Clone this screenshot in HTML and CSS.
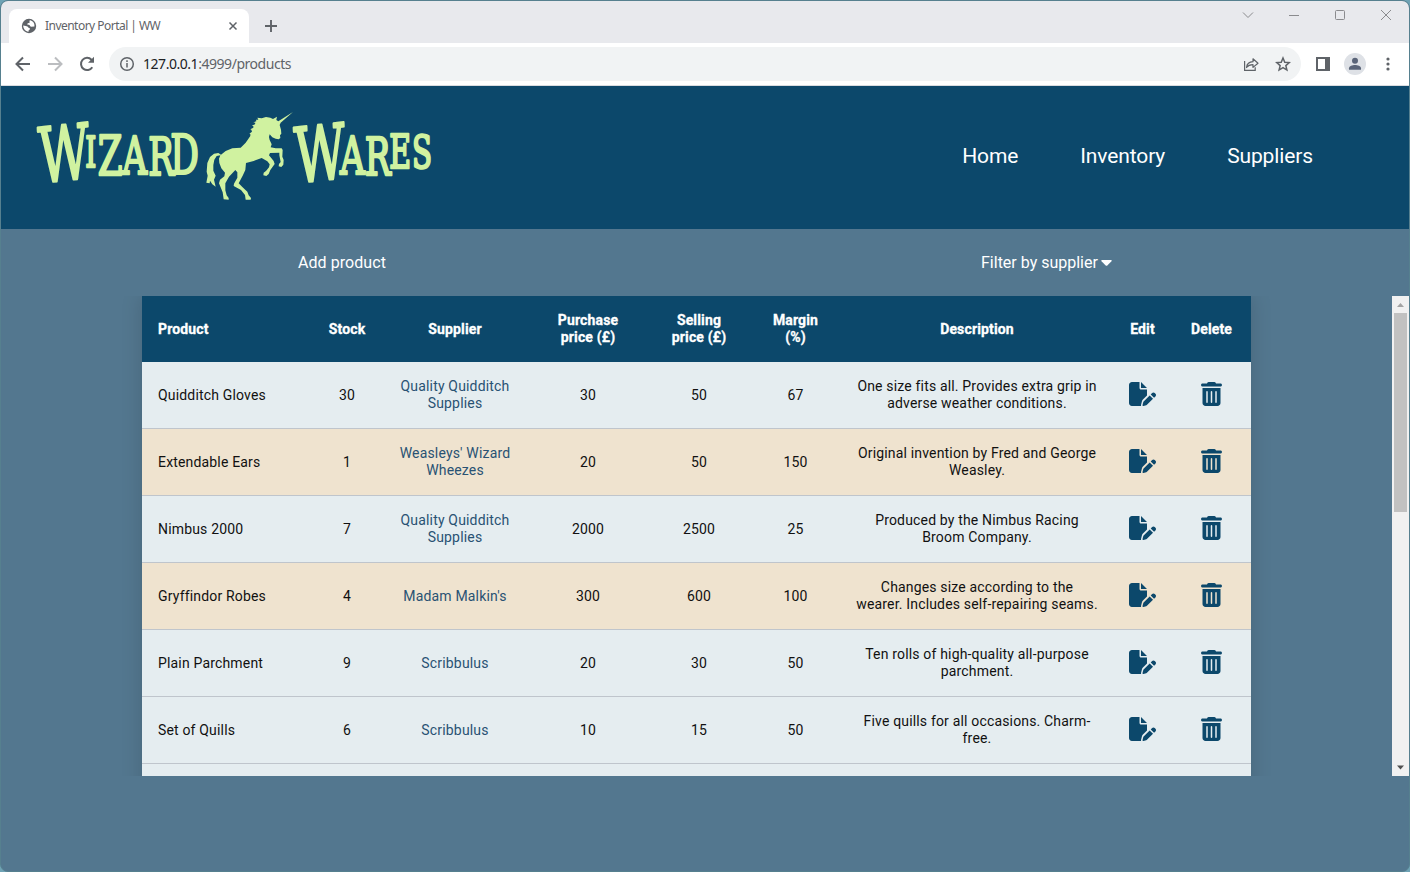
FILE: index.html
```html
<!DOCTYPE html>
<html lang="en">
<head>
<meta charset="utf-8">
<title>Inventory Portal | WW</title>
<link rel="stylesheet" href="styles.css">
</head>
<body>
<svg class="defs" aria-hidden="true">
  <symbol id="edit" viewBox="0 0 576 512"><path d="M0 64C0 28.700 28.700 0 64 0H224V128c0 17.700 14.300 32 32 32H384V285.700l-86.800 86.800c-10.300 10.300-17.500 23.100-21 37.200l-18.700 74.900c-2.300 9.200-1.800 18.800 1.300 27.500H64c-35.300 0-64-28.700-64-64V64zm384 64H256V0L384 128zM549.800 235.700l14.400 14.400c15.600 15.600 15.600 40.900 0 56.600l-29.400 29.400-71-71 29.400-29.400c15.600-15.600 40.900-15.600 56.600 0zM311.900 417L441.100 287.800l71 71L382.900 487.900c-4.100 4.100-9.200 7-14.900 8.400l-60.100 15c-5.500 1.400-11.200-.2-15.200-4.200s-5.600-9.700-4.200-15.200l15-60.100c1.400-5.600 4.300-10.800 8.400-14.900z"/></symbol>
  <symbol id="trash" viewBox="0 0 448 512"><path d="M135.200 17.700C140.600 6.800 151.700 0 163.800 0H284.200c12.100 0 23.200 6.800 28.600 17.700L320 32h96c17.700 0 32 14.300 32 32s-14.300 32-32 32H32C14.300 96 0 81.700 0 64S14.300 32 32 32h96l7.200-14.300zM32 128H416V448c0 35.300-28.700 64-64 64H96c-35.300 0-64-28.700-64-64V128zm96 64c-8.800 0-16 7.200-16 16V432c0 8.800 7.200 16 16 16s16-7.200 16-16V208c0-8.800-7.200-16-16-16zm96 0c-8.800 0-16 7.200-16 16V432c0 8.800 7.200 16 16 16s16-7.200 16-16V208c0-8.800-7.200-16-16-16zm96 0c-8.800 0-16 7.200-16 16V432c0 8.800 7.200 16 16 16s16-7.200 16-16V208c0-8.800-7.200-16-16-16z"/></symbol>
</svg>
<div class="window">
  <div class="tabstrip">
    <div class="tab">
      <svg class="globe" width="16" height="16" viewBox="0 0 16 16"><circle cx="8" cy="8" r="7.200" fill="#5f6368"/><path d="M9.300 2.300c-1 .3-1.100.8-.7 1.500.3.800-.3 1.200-1.100 1.300-.9.200-1.300.7-1.100 1.400.5.500 1.600.1 2.300.8.500.5.500 1.300 1.300 1.500l3.400-.2c.6-3-1.300-5.500-4.100-6.300zM2.200 7.500c0 3.300 2.300 5.800 5.300 6.200l.2-1.400 1.300-1c.1-1-.6-1.300-1.500-1.500-.6-1.200-1.400-1.800-2.700-1.900z" fill="#fff"/></svg>
      <span class="tab-title">Inventory Portal | WW</span>
      <svg class="tab-close" width="10" height="10" viewBox="0 0 10 10"><path d="M1.500 1.500l7 7M8.500 1.500l-7 7" stroke="#5f6368" stroke-width="1.500"/></svg>
    </div>
    <svg class="plus" width="14" height="14" viewBox="0 0 14 14"><path d="M7 1v12M1 7h12" stroke="#5f6368" stroke-width="1.900"/></svg>
    <div class="controls">
      <svg width="12" height="12" viewBox="0 0 12 12"><path d="M1 3.500l5 5 5-5"/></svg>
      <svg width="12" height="12" viewBox="0 0 12 12"><path d="M1 6.500h10"/></svg>
      <svg width="12" height="12" viewBox="0 0 12 12"><rect x="1.500" y="1.500" width="9" height="9" rx="1"/></svg>
      <svg width="12" height="12" viewBox="0 0 12 12"><path d="M1 1l10 10M11 1L1 11"/></svg>
    </div>
  </div>
  <div class="toolbar">
    <svg class="nav-icon" viewBox="0 0 16 16"><path d="M15 8H2.500M8 1.500L1.500 8 8 14.500"/></svg>
    <svg class="nav-icon dim" viewBox="0 0 16 16"><path d="M1 8h12.500M8 1.500L14.500 8 8 14.500"/></svg>
    <svg class="nav-icon" viewBox="0 0 16 16"><path d="M13.300 11.200a6.100 6.100 0 1 1-.8-7.500L14 5.200"/><path d="M15 .8v6H9z" fill="#5f6368" stroke="none"/></svg>
    <div class="address">
      <svg width="16" height="16" viewBox="0 0 16 16" fill="none" stroke="#5f6368" stroke-width="1.500"><circle cx="8" cy="8" r="6.300"/><path d="M8 7v4.500M8 4.200v1.700"/></svg>
      <span class="url"><b>127.0.0.1</b>:4999/products</span>
      <svg class="share" width="16" height="16" viewBox="0 0 16 16" fill="none" stroke="#5f6368" stroke-width="1.200"><path d="M1.600 5v9.300h10.600v-3"/><path d="M3.500 11.500c.5-4 2.800-5.700 6.500-5.800V2.800l5 4.400-5 4.200V8.700c-3 0-5 .8-6.500 2.800z" stroke-linejoin="round"/></svg>
      <svg width="16" height="16" viewBox="0 0 16 16" fill="none" stroke="#5f6368" stroke-width="1.500"><path d="M8 2l1.750 4.200 4.550.4-3.450 3 1.050 4.450L8 11.700l-3.900 2.350 1.050-4.450-3.450-3 4.550-.4z"/></svg>
    </div>
    <svg class="panel-icon" width="14" height="14" viewBox="0 0 14 14"><path d="M1 1h12v12H1z" fill="none" stroke="#5f6368" stroke-width="2"/><path d="M9 0h5v14H9z" fill="#5f6368"/></svg>
    <svg class="avatar" width="22" height="22" viewBox="0 0 22 22"><circle cx="11" cy="11" r="11" fill="#dee1e6"/><circle cx="11" cy="7.800" r="3" fill="#5a6478"/><path d="M5 16.700v-1.500c0-2 3.500-3.200 6-3.200s6 1.200 6 3.200v1.500z" fill="#5a6478"/></svg>
    <svg class="dots" width="4" height="14" viewBox="0 0 4 14" fill="#5f6368"><circle cx="2" cy="2" r="1.600"/><circle cx="2" cy="7" r="1.600"/><circle cx="2" cy="12" r="1.600"/></svg>
  </div>
  <header class="site-header">
    <svg class="logo" width="410" height="100" viewBox="30 105 410 100">
      <g class="wordmark" transform="scale(.65 1)">
        <text><tspan class="w" x="61" y="183" rotate="-4">W</tspan><tspan x="131" y="167" font-size="43">I</tspan><tspan x="150.500" y="175" font-size="55">Z</tspan><tspan x="188" y="174.500" font-size="53">A</tspan><tspan x="228" y="175" font-size="53">R</tspan><tspan x="262" y="174" font-size="55">D</tspan></text>
        <text><tspan class="w" x="455" y="183" rotate="-4">W</tspan><tspan x="523" y="174.500" font-size="53">A</tspan><tspan x="561" y="175" font-size="53">R</tspan><tspan x="599" y="168" font-size="46">E</tspan><tspan x="634" y="168" font-size="45">S</tspan></text>
      </g>
      <path class="unicorn" transform="translate(200 105) scale(.33333)" d="M279 21L242 53 239 60 243 74 244 86 240 91 241 99 236 103 227 101 217 97 209 88 207 96 209 105 215 118 212 127 227 130 245 130 248 135 247 155 251 165 250 179 244 186 236 184 237 177 242 171 238 151 238 143 210 144 207 151 221 168 224 177 211 195 206 207 199 213 190 211 191 203 198 198 207 187 209 178 202 169 185 159 161 168 138 174 136 195 128 212 116 235 127 246 142 260 146 271 153 279 152 284 137 284 135 270 123 255 101 243 102 236 112 218 112 202 106 195 87 215 76 235 76 256 80 271 86 279 86 284 71 283 68 262 57 235 60 224 73 214 75 203 64 190 58 174 57 161 61 151 50 153 43 164 40 180 40 197 47 212 42 224 47 245 37 238 30 227 29 235 19 233 23 212 20 200 22 174 30 156 42 146 55 144 63 149 77 138 97 130 122 128 137 113 151 93 151 87 148 86 156 80 154 74 151 73 160 68 160 63 155 62 165 58 166 53 160 52 169 49 168 44 175 44 172 38 185 40 198 36 211 38 219 42 231 35 229 45 235 49Z"/>
    </svg>
    <nav class="site-nav"><a>Home</a><a>Inventory</a><a>Suppliers</a></nav>
  </header>
  <div class="actions">
    <a class="add">Add product</a>
    <a class="filter">Filter by supplier <svg width="11" height="6" viewBox="0 0 11 6"><path d="M1 0h9q1.200.4.500 1.300L6.300 5.500q-.8.700-1.600 0L.5 1.300Q-.2.400 1 0z" fill="#fff"/></svg></a>
  </div>
  <div class="viewport">
    <div class="table-clip">
    <table class="products">
      <colgroup><col class="c-product"><col class="c-stock"><col class="c-supplier"><col class="c-buy"><col class="c-sell"><col class="c-margin"><col class="c-desc"><col class="c-edit"><col class="c-delete"></colgroup>
      <thead><tr><th>Product</th><th>Stock</th><th>Supplier</th><th>Purchase<br>price (£)</th><th>Selling<br>price (£)</th><th>Margin<br>(%)</th><th>Description</th><th>Edit</th><th>Delete</th></tr></thead>
      <tbody>
        <tr><td>Quidditch Gloves</td><td>30</td><td><a>Quality Quidditch<br>Supplies</a></td><td>30</td><td>50</td><td>67</td><td>One size fits all. Provides extra grip in<br>adverse weather conditions.</td><td><svg class="edit"><use href="#edit"/></svg></td><td><svg class="trash"><use href="#trash"/></svg></td></tr>
        <tr class="low"><td>Extendable Ears</td><td>1</td><td><a>Weasleys' Wizard<br>Wheezes</a></td><td>20</td><td>50</td><td>150</td><td>Original invention by Fred and George<br>Weasley.</td><td><svg class="edit"><use href="#edit"/></svg></td><td><svg class="trash"><use href="#trash"/></svg></td></tr>
        <tr><td>Nimbus 2000</td><td>7</td><td><a>Quality Quidditch<br>Supplies</a></td><td>2000</td><td>2500</td><td>25</td><td>Produced by the Nimbus Racing<br>Broom Company.</td><td><svg class="edit"><use href="#edit"/></svg></td><td><svg class="trash"><use href="#trash"/></svg></td></tr>
        <tr class="low"><td>Gryffindor Robes</td><td>4</td><td><a>Madam Malkin's</a></td><td>300</td><td>600</td><td>100</td><td>Changes size according to the<br>wearer. Includes self-repairing seams.</td><td><svg class="edit"><use href="#edit"/></svg></td><td><svg class="trash"><use href="#trash"/></svg></td></tr>
        <tr><td>Plain Parchment</td><td>9</td><td><a>Scribbulus</a></td><td>20</td><td>30</td><td>50</td><td>Ten rolls of high-quality all-purpose<br>parchment.</td><td><svg class="edit"><use href="#edit"/></svg></td><td><svg class="trash"><use href="#trash"/></svg></td></tr>
        <tr><td>Set of Quills</td><td>6</td><td><a>Scribbulus</a></td><td>10</td><td>15</td><td>50</td><td>Five quills for all occasions. Charm-<br>free.</td><td><svg class="edit"><use href="#edit"/></svg></td><td><svg class="trash"><use href="#trash"/></svg></td></tr>
        <tr><td></td><td></td><td></td><td></td><td></td><td></td><td></td><td></td><td></td></tr>
      </tbody>
    </table>
    </div>
    <div class="scrollbar">
      <svg width="17" height="17" viewBox="0 0 17 17"><path d="M5 11l3.500-4 3.500 4z" fill="#a3a3a3"/></svg>
      <div class="thumb"></div>
      <svg class="down" width="17" height="17" viewBox="0 0 17 17"><path d="M5 6.500h7l-3.500 4z" fill="#505050"/></svg>
    </div>
  </div>
</div>
</body>
</html>
```

FILE: styles.css
```css
* { box-sizing: border-box; }
body { margin: 0; height: 872px; overflow: hidden; background: #6fa3b5; font-family: Roboto, sans-serif; }
svg { display: block; }
.defs { display: none; }
.window { display: flex; flex-direction: column; width: 1410px; height: 872px; border: 1px solid #56808f; border-radius: 8px; overflow: hidden; background: #53778f; }

.tabstrip { display: flex; flex: none; height: 42px; background: #e8e9ed; padding-left: 8px; font-family: "Noto Sans", sans-serif; }
.tab { display: flex; align-items: center; width: 240px; height: 34px; margin-top: 8px; padding: 0 11px 0 12px; border-radius: 8px 8px 0 0; background: #fff; }
.tab-title { margin: -2px 0 0 8px; font-size: 12px; letter-spacing: -.53px; color: #5f6368; flex: 1; white-space: nowrap; }
.plus { margin: 18px 0 0 15px; }
.controls { display: flex; gap: 34px; margin: 8px 17px 0 auto; fill: none; stroke: #8a8b8e; stroke-width: 1; }

.toolbar { display: flex; align-items: center; flex: none; height: 43px; padding-left: 14px; background: #fff; border-bottom: 1px solid #dadce0; }
.nav-icon { width: 16px; height: 16px; margin-right: 16px; fill: none; stroke: #5f6368; stroke-width: 2; }
.nav-icon.dim { stroke: #bbbdc0; }
.address { display: flex; align-items: center; width: 1192px; height: 34px; margin-left: -2px; padding: 0 10px; border-radius: 17px; background: #f1f3f4; }
.url { margin: -2px 0 0 8px; flex: 1; font: 14px "Noto Sans", sans-serif; letter-spacing: -.46px; color: #5f6368; }
.url b { font-weight: 400; color: #202124; }
.share { margin-right: 16px; }
.panel-icon { margin-left: 15px; }
.avatar { margin-left: 14px; }
.dots { margin-left: 20px; }

.site-header { display: flex; justify-content: space-between; flex: none; height: 143px; padding: 19px 96px 0 29px; background: #0c486b; }
.wordmark { font-family: "DejaVu Serif", serif; fill: #d0f2a0; stroke: #d0f2a0; stroke-width: 2.5; stroke-linejoin: round; }
.wordmark .w { font-size: 76px; }
.unicorn { fill: #d0f2a0; }
.site-nav { display: flex; gap: 62px; padding-top: 38px; font-size: 21px; line-height: 26px; letter-spacing: -.12px; color: #fff; }

.actions { display: flex; align-items: flex-start; flex: none; height: 67px; padding-top: 24px; font-size: 16px; line-height: 20px; color: #fff; }
.add { margin-left: 297px; width: 683px; letter-spacing: .06px; }
.filter { display: flex; align-items: center; gap: 3px; }

.viewport { display: flex; justify-content: space-between; flex: none; height: 480px; overflow: hidden; }
.table-clip { padding: 0 20px; margin-left: 121px; height: 480px; overflow: hidden; }
.products { width: 1109px; table-layout: fixed; border-collapse: separate; border-spacing: 0; box-shadow: 0 0 20px rgba(0, 0, 0, .15); font-size: 14px; line-height: 17px; text-align: center; }
.c-product { width: 170px; } .c-stock { width: 70px; } .c-supplier { width: 146px; } .c-buy { width: 120px; } .c-sell { width: 102px; }
.c-margin { width: 91px; } .c-desc { width: 272px; } .c-edit { width: 59px; } .c-delete { width: 79px; }
th { height: 66px; padding: 0; background: #0c486b; color: #fff; font-size: 14px; font-weight: 700; letter-spacing: .15px; -webkit-text-stroke: .3px #fff; }
td { height: 67px; padding: 0; border-bottom: 1px solid #bfc5cc; background: #e5edf0; color: #111; letter-spacing: .17px; white-space: nowrap; }
th:first-child, td:first-child { padding-left: 16px; text-align: left; }
.low td { background: #efe3cf; }
td a { color: #295273; }
.edit, .trash { margin: 0 auto; fill: #0c486b; height: 24px; position: relative; top: -1px; }
.edit { width: 27px; }
.trash { width: 21px; }

.scrollbar { display: flex; flex-direction: column; width: 17px; background: #f1f1f1; }
.thumb { height: 199px; margin: 0 2px; background: #c1c1c1; }
.down { margin-top: auto; }
```
